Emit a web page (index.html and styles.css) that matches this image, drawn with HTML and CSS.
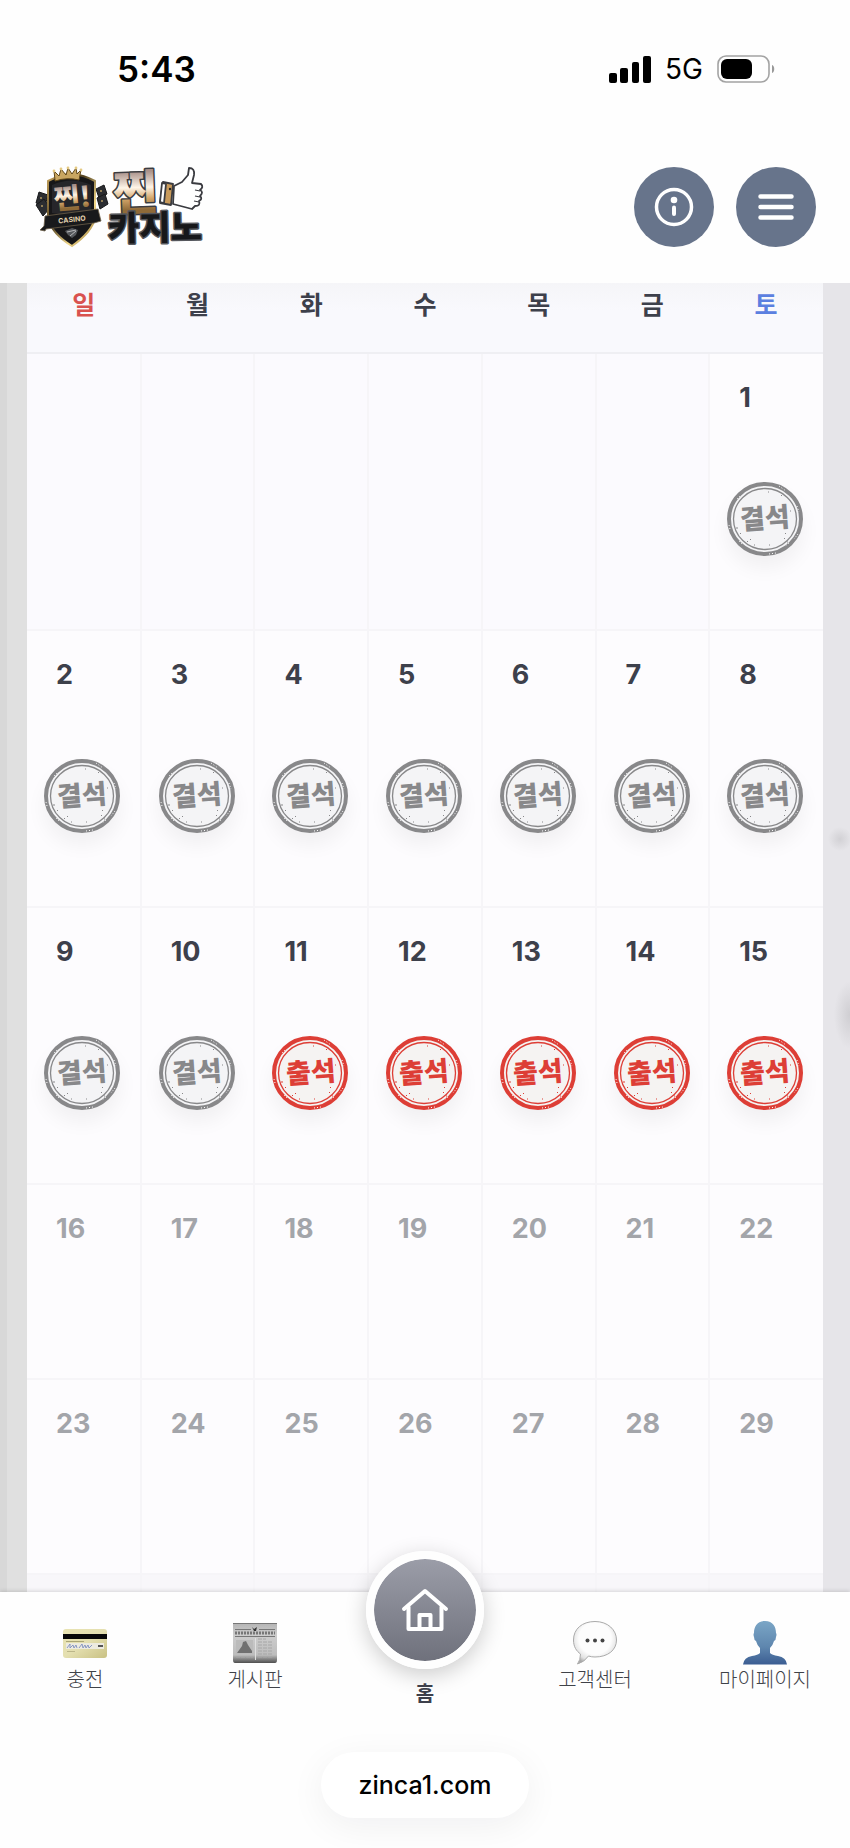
FILE: index.html
```html
<!DOCTYPE html>
<html lang="ko">
<head>
  <meta charset="UTF-8" />
  <meta name="viewport" content="width=device-width, initial-scale=1.0" />
  <title>찐카지노 출석부</title>
  <link rel="stylesheet" href="styles.css">
</head>
<body>
  <div class="status-bar">
    <span class="clock">5:43</span>
    <div class="status-right">
      <svg width="42" height="27" viewBox="0 0 42 27">
        <rect x="0" y="17" width="8" height="10" rx="2" />
        <rect x="11" y="12" width="8" height="15" rx="2" />
        <rect x="23" y="6" width="7" height="21" rx="2" />
        <rect x="34" y="0" width="8" height="27" rx="2" />
      </svg>
      <span class="network">5G</span>
      <svg width="58" height="28" viewBox="0 0 58 28">
        <rect x="1" y="1" width="51" height="26" rx="8" fill="none" stroke="#a3a3a3" stroke-width="1.6" />
        <rect x="4" y="4" width="31" height="20" rx="6" />
        <path d="M55 10c3 1 3 7 0 8z" fill="#999" />
      </svg>
    </div>
  </div>

  <header class="header">
    <a href="#" class="logo" aria-label="찐카지노">
      <svg width="172" height="84" viewBox="0 0 172 84">
        <defs>
          <linearGradient id="gold" x1="0" y1="0" x2="0" y2="1">
            <stop offset="0.25" stop-color="#a9918a" />
            <stop offset="0.48" stop-color="#fff5e8" />
            <stop offset="0.64" stop-color="#d3a568" />
            <stop offset="0.8" stop-color="#8f6a38" />
          </linearGradient>
          <linearGradient id="rim" x1="0" y1="0" x2="1" y2="1">
            <stop offset="0" stop-color="#c6a35c" />
            <stop offset="0.4" stop-color="#50401f" />
            <stop offset="0.7" stop-color="#f3d98b" />
            <stop offset="1" stop-color="#8a6a2a" />
          </linearGradient>
        </defs>
        <g fill="#2b2d31" stroke="#17181a">
          <path d="M5 27l9 3-3 11-9-3z" />
          <path d="M2 40l8-6 6 9-7 8z" />
          <path d="M62 24l8-4 3 9-8 4z" />
          <path d="M63 33l8-4 3 10-8 5z" />
        </g>
        <g fill="#b59a62">
          <circle cx="7" cy="33" r="1" />
          <circle cx="8" cy="41" r="1" />
          <circle cx="67" cy="26" r="1" />
          <circle cx="68" cy="36" r="1" />
        </g>
        <path d="M14 16Q30 8 38 9Q50 10 61 16L61 53Q58 67 38 81Q18 69 14 53z" fill="#171719" stroke="url(#rim)" stroke-width="2" />
        <path d="M18 20Q38 11 57 20L57 48Q38 52 18 48z" fill="#26262a" />
        <path d="M21 15L20 6l5 5 2-7 5 6 2-7 4 6 4-6 1 6 4-4-2 10q-12-3-24 1z" fill="#c9a661" stroke="#604719" stroke-width="1" />
        <g fill="#e5ca83">
          <circle cx="20" cy="6" r="1.4" />
          <circle cx="27" cy="4" r="1.4" />
          <circle cx="34" cy="3" r="1.4" />
          <circle cx="42" cy="3" r="1.4" />
          <circle cx="47" cy="5" r="1.4" />
        </g>
        <path d="M11 51l53-7 3 12-7 2-48 6-1 2-5-1 4-4z" fill="#18191b" stroke="#6d6049" stroke-width="0.8" />
        <path d="M31 66l7-3 6 2-2 5-4 3-4-3z" fill="#55585c" />
        <path d="M33 67l9-2M36 71l6-5" stroke="#b7b8ba" stroke-width="1" />
        <text x="20" y="43" class="logo-badge" transform="rotate(-5 38 35)" fill="url(#gold)">찐!</text>
        <text x="38" y="57" class="logo-casino" transform="rotate(-6 38 55)" text-anchor="middle">CASINO</text>
        <text x="79" y="45" class="logo-main" transform="rotate(-2 100 25)" fill="url(#gold)">찐</text>
        <text x="74" y="75" class="logo-sub" transform="rotate(-1 120 64)">카지노</text>
        <g stroke="#3a3b40" stroke-width="1.8" stroke-linejoin="round">
          <path d="M129 17l10 2-2 21-11-2z" fill="#c89a5b" />
          <path d="M128 18l4 1-2 19-4-1z" fill="#fff" />
          <path d="M140 21l8-4 6-7 1-7q6 0 5 7l-2 8 9 1q3 3-1 6q4 2 0 6q3 3-1 5q2 5-4 5l-3 3-19-5z" fill="#fff" />
          <path d="M166 26l-5-1M166 32l-5-1M165 37l-5-1" fill="none" stroke-width="1.2" />
        </g>
        <circle cx="136" cy="24" r="1.2" fill="#222" />
      </svg>
    </a>
    <div class="header-buttons">
      <button type="button" class="round-btn" aria-label="정보">
        <svg width="40" height="40" viewBox="0 0 40 40" fill="none" stroke="#fff">
          <circle cx="20" cy="20" r="17.5" stroke-width="3.5" />
          <circle cx="20" cy="13" r="3.3" fill="#fff" stroke="none" />
          <path d="M20 20.500v6.500" stroke-width="4" stroke-linecap="round" />
        </svg>
      </button>
      <button type="button" class="round-btn" aria-label="메뉴">
        <svg width="40" height="40" viewBox="0 0 40 40" stroke="#fff" stroke-width="4.5" stroke-linecap="round">
          <path d="M4.500 9.500h31M4.500 20h31M4.500 30.500h31" />
        </svg>
      </button>
    </div>
  </header>

  <!-- stamp ring, shared by all days -->
  <svg width="0" height="0" class="defs">
    <symbol id="ring" viewBox="0 0 76 74">
      <ellipse cx="38" cy="37" rx="36" ry="35" fill="var(--paper)" stroke="currentColor" stroke-width="4" />
      <ellipse cx="38" cy="37" rx="31.500" ry="30.500" fill="none" stroke="currentColor" stroke-width="1.3" />
      <path d="M52 4l7 5M70 24l2 6M71 52l-4 5M42 72l7-1M12 59l4 4M3 47l-1-4M10 17l3-3M62 61l-4 3" fill="none" stroke="#fff" stroke-width="1" stroke-dasharray="1 2" />
      <path d="M20 59l1 1M23 57l1 1M27 63h1M42 63h1M57 56l1 1M58 51l1 1M60 60h1M9 46h2M54 13l1 1M41 10h1M63 29h1M13 51l1 1" stroke="currentColor" stroke-width="1" />
    </symbol>
  </svg>

  <main class="content">
    <table class="calendar">
      <thead>
        <tr>
          <th class="sun">일</th>
          <th>월</th>
          <th>화</th>
          <th>수</th>
          <th>목</th>
          <th>금</th>
          <th class="sat">토</th>
        </tr>
      </thead>
      <tbody id="days"></tbody>
    </table>
  </main>

  <nav class="bottom-nav">
    <a href="#" class="nav-item">
      <svg width="46" height="46" viewBox="0 0 46 46">
        <defs>
          <linearGradient id="card" x1="0" y1="0" x2="1" y2="1">
            <stop offset="0" stop-color="#e9e4b4" />
            <stop offset="0.5" stop-color="#e4dfb0" />
            <stop offset="1" stop-color="#c9c183" />
          </linearGradient>
        </defs>
        <rect x="1" y="9" width="44" height="29" rx="3" fill="url(#card)" />
        <rect x="1" y="14" width="44" height="5" fill="#080808" />
        <path d="M4 21.500h18" stroke="#aaa576" />
        <rect x="4" y="23" width="38" height="6" fill="#eceae0" />
        <path d="M5 28l3-4 0 4 3-3 1 3 2-3 1 3M17 28l3-4 1 4 2-3 1 3 2-3 1 3 3-3" fill="none" stroke="#7f8fc0" stroke-width="0.9" />
        <path d="M36 26h5" stroke="#555" stroke-width="2" />
        <path d="M5 31.500h8" stroke="#bcb689" />
      </svg>
      <span>충전</span>
    </a>
    <a href="#" class="nav-item">
      <svg width="46" height="46" viewBox="0 0 46 46">
        <defs>
          <linearGradient id="paper" x1="0" y1="0" x2="0" y2="1">
            <stop offset="0" stop-color="#b4b4b4" />
            <stop offset="0.3" stop-color="#cdcdcd" />
            <stop offset="0.8" stop-color="#bdbdbd" />
            <stop offset="1" stop-color="#4e4e4e" />
          </linearGradient>
        </defs>
        <path d="M1 3h44v37q0 3-2 3H3q-2 0-2-3z" fill="url(#paper)" />
        <path d="M1 3.500h44" stroke="#777" />
        <path d="M20 7l2 2 3-2-1 4h-2z" fill="#333" />
        <path d="M3 9.500h16M27 9.500h16M3 16.500h40" stroke="#777" />
        <path d="M3 13h40" stroke="#777" stroke-width="3" stroke-dasharray="2 1" />
        <path d="M4 20h17v14H4z" fill="#bbb" />
        <path d="M5 33l5-7 1-4 3-1 2 4 4 6v2z" fill="#707070" />
        <path d="M26 19h8M26 22h15M26 25h15M26 28h15M26 31h15M26 34h15M4 37h17M26 37h15" stroke="#a6a6a6" stroke-dasharray="4 1" />
        <path d="M23.500 18v22" stroke="#e0e0e0" />
      </svg>
      <span>게시판</span>
    </a>
    <a href="#" class="nav-item home">
      <span class="home-circle">
        <svg width="48" height="48" viewBox="0 0 48 48" fill="none" stroke="#fff" stroke-width="4" stroke-linecap="round" stroke-linejoin="round">
          <path d="M3 23L24 5l21 18" />
          <path d="M7.500 21v22h33V21" />
          <path d="M18.500 43V29h11v14" />
        </svg>
      </span>
      <span>홈</span>
    </a>
    <a href="#" class="nav-item">
      <svg width="46" height="46" viewBox="0 0 46 46">
        <defs>
          <radialGradient id="bubble" cx="0.5" cy="0.4" r="0.62">
            <stop offset="0.6" stop-color="#fdfdfd" />
            <stop offset="0.85" stop-color="#e2e2e2" />
            <stop offset="1" stop-color="#a9a9a9" />
          </radialGradient>
        </defs>
        <path d="M23 1.500C10 1.500 1.500 9 1.500 20c0 7 3 11 7 14q0 6-3 10q7-2 11-8q3 1 6.500 1c13 0 21.500-7 21.500-17S36 1.500 23 1.500z" fill="url(#bubble)" stroke="#aaa" />
        <g fill="#444">
          <circle cx="15.5" cy="20.5" r="2" />
          <circle cx="23" cy="20.5" r="2" />
          <circle cx="30.5" cy="20.5" r="2" />
        </g>
      </svg>
      <span>고객센터</span>
    </a>
    <a href="#" class="nav-item">
      <svg width="46" height="46" viewBox="0 0 46 46">
        <defs>
          <linearGradient id="person" x1="0" y1="0" x2="0" y2="1">
            <stop offset="0" stop-color="#7ba6c6" />
            <stop offset="0.6" stop-color="#5e86ae" />
            <stop offset="1" stop-color="#3b5d92" />
          </linearGradient>
        </defs>
        <path d="M23 1c-8 0-11 6-11 12q-1 1 0 4q0 3 2 4q1 4 4 7v5q-2 2-8 3Q2 37 1 44.500h44Q44 37 36 36q-6-1-8-3v-5q3-3 4-7q2-1 2-4q1-3 0-4C34 7 31 1 23 1z" fill="url(#person)" />
      </svg>
      <span>마이페이지</span>
    </a>
  </nav>

  <footer class="address">
    <a href="#" class="url-pill">zinca1.com</a>
  </footer>

  <script>
    const today = 15;
    const firstAttended = 11;
    const offset = 6;
    const tbody = document.getElementById('days');

    function stamp(day) {
      if (day > today) return '';
      const attended = day >= firstAttended;
      return `
        <div class="stamp ${attended ? 'attended' : 'absent'}">
          <svg class="ring"><use href="#ring"></use></svg>
          <span class="stamp-text">${attended ? '출석' : '결석'}</span>
        </div>`;
    }

    for (let week = 0; week < 6; week++) {
      const row = document.createElement('tr');
      if (week === 5) {
        row.className = 'last';
      } else if (week > 2) {
        row.className = 'future';
      }

      for (let i = 0; i < 7; i++) {
        const day = week * 7 + i - offset + 1;
        const cell = document.createElement('td');
        if (day < 1 || day > 29) {
          cell.className = 'empty';
        } else {
          cell.innerHTML = `<span class="num">${day}</span>${stamp(day)}`;
        }
        row.appendChild(cell);
      }
      tbody.appendChild(row);
    }
  </script>
</body>
</html>
```
FILE: styles.css
```css
* {
  box-sizing: border-box;
}

body {
  font-family: Inter, 'Noto Sans CJK KR', sans-serif;
  background-color: #fefefe;
  color: #3d404b;
  margin: 0;
  min-height: 100vh;
  display: flex;
  flex-direction: column;
}

a {
  color: inherit;
  text-decoration: none;
}

svg {
  display: block;
}

.defs {
  position: absolute;
}

/* status bar */
.status-bar {
  height: 138px;
  padding: 0 75px 0 117px;
  display: flex;
  justify-content: space-between;
  align-items: center;
  color: #000;
}

.clock {
  font-size: 35px;
  font-weight: 600;
}

.status-right {
  display: flex;
  align-items: center;
  gap: 14px;
}

.network {
  font-size: 28px;
}

/* header */
.header {
  height: 145px;
  padding: 0 34px 7px;
  display: flex;
  justify-content: space-between;
  align-items: center;
}

.logo svg {
  overflow: visible;
}

.logo-badge,
.logo-main,
.logo-sub {
  font-family: 'Noto Sans CJK KR', sans-serif;
  font-weight: 900;
  paint-order: stroke;
  stroke-linejoin: round;
}

.logo-badge {
  font-size: 28px;
}

.logo-casino {
  font-size: 7px;
  font-weight: 700;
  fill: #e3d3b0;
}

.logo-main {
  font-size: 48px;
  stroke: #3a3b40;
  stroke-width: 3px;
}

.logo-sub {
  font-size: 34px;
  fill: #17181a;
  stroke: #55575c;
  stroke-width: 3px;
}

.header-buttons {
  display: flex;
  gap: 22px;
}

.round-btn {
  width: 80px;
  height: 80px;
  border: none;
  border-radius: 50%;
  padding: 0;
  background-color: #67748b;
  display: flex;
  align-items: center;
  justify-content: center;
}

/* calendar */
.content {
  flex: 1;
  padding: 0 27px;
  background:
    radial-gradient(ellipse 16px 34px at 100% 732px, #cfced2, transparent),
    radial-gradient(circle 12px at calc(100% - 10px) 556px, #d2d1d5, transparent),
    linear-gradient(to right, #d8d8d8 7px, #e0e0e0 7px, #e0e0e0 50%, #e6e5e9 50%);
}

.calendar {
  width: 100%;
  table-layout: fixed;
  border-collapse: collapse;
  background-color: #fdfcfe;
}

th {
  height: 70px;
  padding: 3px 0 0;
  vertical-align: top;
  background: linear-gradient(#f5f5f8, #f9f9fd 40%);
  border-bottom: 2px solid #efeff3;
  font-family: 'Noto Sans CJK KR', sans-serif;
  font-size: 25px;
  line-height: 34px;
  font-weight: 700;
}

.sun {
  color: #d9524f;
}

.sat {
  color: #5b80e0;
}

td {
  height: 277px;
  padding: 28px 0 0 29px;
  vertical-align: top;
  border-right: 2px solid #f6f5f8;
  border-bottom: 2px solid #f6f5f8;
}

td:last-child {
  border-right: none;
}

.empty {
  background-color: #fbfafe;
}

.future td {
  height: 195px;
}

.last td {
  height: 18px;
  padding: 0;
  border-top: 2px solid #f1f0f3;
  border-bottom: none;
  background-color: #f8f7fa;
}

.num {
  display: block;
  font-size: 27px;
  line-height: 32px;
  font-weight: 700;
}

.future .num {
  color: #a3a5aa;
}

.stamp {
  width: 76px;
  height: 74px;
  margin: 68px 0 0 -12px;
  display: grid;
  place-items: center;
  border-radius: 50%;
  box-shadow: 0 12px 20px rgba(0, 0, 0, 0.05);
}

.ring,
.stamp-text {
  grid-area: 1 / 1;
}

.ring {
  width: 76px;
  height: 74px;
}

.stamp-text {
  font-family: 'Noto Sans CJK KR', sans-serif;
  font-size: 27px;
  line-height: 34px;
  padding-bottom: 4px;
  font-weight: 900;
  transform: rotate(-4deg);
}

.absent {
  --paper: #f4f4f6;
  color: #88888a;
}

.attended {
  --paper: #f5f3f2;
  color: #dd3e36;
}

/* bottom menu */
.bottom-nav {
  position: relative;
  height: 130px;
  display: grid;
  grid-template-columns: repeat(5, 1fr);
  background-color: #fefefe;
  box-shadow: 0 -1px 4px rgba(0, 0, 0, 0.14);
}

.nav-item {
  display: flex;
  flex-direction: column;
  align-items: center;
  padding-top: 28px;
  font-family: 'Noto Sans CJK KR', sans-serif;
  font-size: 20px;
  line-height: 26px;
  font-weight: 300;
  color: #3f4248;
}

.home {
  padding-top: 0;
  margin-top: -41px;
  font-weight: 700;
  color: #3d404b;
}

.home-circle {
  width: 118px;
  height: 118px;
  margin-bottom: 11px;
  border: 8px solid #fefefe;
  border-radius: 50%;
  background: linear-gradient(#9b9da8, #6f717c);
  background-clip: padding-box;
  box-shadow: 0 6px 22px rgba(0, 0, 0, 0.2);
  display: flex;
  align-items: center;
  justify-content: center;
}

.address {
  position: relative;
  height: 127px;
  padding-top: 30px;
  display: flex;
  justify-content: center;
  align-items: flex-start;
  background-color: #fefefe;
}

.url-pill {
  padding: 0 38px;
  border-radius: 33px;
  background-color: #fff;
  box-shadow: 0 8px 36px rgba(0, 0, 30, 0.06);
  color: #000;
  font-size: 25px;
  line-height: 66px;
  font-weight: 500;
}
```
